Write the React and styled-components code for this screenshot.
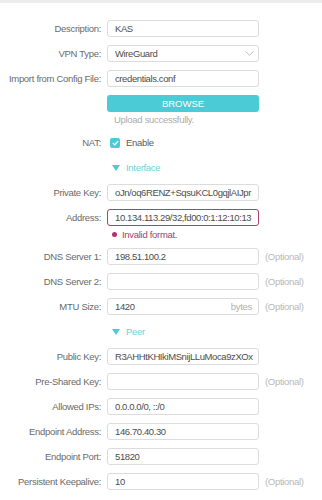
import React from 'react'
import styled, { createGlobalStyle } from 'styled-components'

const GlobalStyle = createGlobalStyle`
    body{
        margin: 0;
        background: #fff;
        font-family: "Liberation Sans", Arial, sans-serif;
    }
`;

const teal = '#4acbd6';

function Field({ label, value, optional, suffix, invalid }) {
    return (
        <Row>
            <Label>{label}</Label>
            <InputBox $invalid={invalid}>
                <InputText>{value}</InputText>
                {suffix && <Suffix>{suffix}</Suffix>}
            </InputBox>
            {optional && <Optional>(Optional)</Optional>}
        </Row>
    )
}

function Section({ title }) {
    return (
        <Row>
            <span />
            <SectionTitle>
                <svg width="8" height="6" viewBox="0 0 8 6"><path d="M0 0 H8 L4 6 Z" fill={teal} /></svg>
                {title}
            </SectionTitle>
        </Row>
    )
}

function App() {
    return (
        <>
            <GlobalStyle />
            <TopBar />
            <Form>
                <Field label="Description:" value="KAS" />
                <Row>
                    <Label>VPN Type:</Label>
                    <InputBox>
                        <InputText>WireGuard</InputText>
                        <svg width="9" height="5" viewBox="0 0 9 5">
                            <path d="M0.5 0.5 L4.5 4.3 L8.5 0.5" fill="none" stroke="#b5b5b5" strokeWidth="0.9" />
                        </svg>
                    </InputBox>
                </Row>
                <Field label="Import from Config File:" value="credentials.conf" />
                <ButtonRow>
                    <span />
                    <Browse>BROWSE</Browse>
                </ButtonRow>
                <HintRow>
                    <span />
                    <Hint>Upload successfully.</Hint>
                </HintRow>
                <Row>
                    <Label>NAT:</Label>
                    <CheckLine>
                        <CheckBox>
                            <svg width="7" height="6" viewBox="0 0 7 6">
                                <path d="M0.8 3 L2.8 4.8 L6.2 1" fill="none" stroke="#fff" strokeWidth="1.2" />
                            </svg>
                        </CheckBox>
                        Enable
                    </CheckLine>
                </Row>
                <Section title="Interface" />
                <Field label="Private Key:" value="oJn/oq6RENZ+SqsuKCL0gqjlAIJpr" />
                <AddressRow>
                    <Label>Address:</Label>
                    <InputBox $invalid>
                        <InputText>10.134.113.29/32,fd00:0:1:12:10:13</InputText>
                    </InputBox>
                </AddressRow>
                <ErrorRow>
                    <span />
                    <ErrorText><Dot />Invalid format.</ErrorText>
                </ErrorRow>
                <Field label="DNS Server 1:" value="198.51.100.2" optional />
                <Field label="DNS Server 2:" value="" optional />
                <Field label="MTU Size:" value="1420" suffix="bytes" optional />
                <Section title="Peer" />
                <Field label="Public Key:" value="R3AHHtKHIkiMSnijLLuMoca9zXOx" />
                <Field label="Pre-Shared Key:" value="" optional />
                <Field label="Allowed IPs:" value="0.0.0.0/0, ::/0" />
                <Field label="Endpoint Address:" value="146.70.40.30" />
                <Field label="Endpoint Port:" value="51820" />
                <Field label="Persistent Keepalive:" value="10" optional />
            </Form>
        </>
    )
}

const TopBar = styled.div`
    height: 3px;
    background: #ececec;
`;

const Form = styled.div`
    padding-top: 17px;
    display: flex;
    flex-direction: column;
`;

const Row = styled.div`
    display: grid;
    grid-template-columns: 101px 152px auto;
    column-gap: 6px;
    align-items: center;
    height: 17px;
    margin-bottom: 8px;
    font-size: 9.5px;
    letter-spacing: -0.3px;
`;

const ButtonRow = styled(Row)`
    margin-bottom: 0;
`;

const HintRow = styled(Row)`
    height: 12px;
    margin-top: 1px;
    margin-bottom: 9px;
`;

const AddressRow = styled(Row)`
    margin-bottom: 2px;
`;

const ErrorRow = styled(Row)`
    height: 12px;
    margin-bottom: 8px;
`;

const Label = styled.div`
    text-align: right;
    color: #6a6a6a;
    white-space: nowrap;
`;

const InputBox = styled.div`
    box-sizing: border-box;
    height: 17px;
    display: flex;
    align-items: center;
    gap: 4px;
    padding: 0 4px 0 7px;
    border: 1px solid ${p => p.$invalid ? '#a5456f' : '#dcdcdc'};
    border-radius: 3px;
    background: #fff;
    overflow: hidden;
`;

const InputText = styled.span`
    flex: 1;
    color: #4d4d4d;
    letter-spacing: -0.4px;
    white-space: nowrap;
    overflow: hidden;
`;

const Suffix = styled.span`
    color: #b0b0b0;
    margin-right: 2px;
`;

const Optional = styled.span`
    color: #b8b8b8;
    white-space: nowrap;
`;

const Browse = styled.div`
    height: 17px;
    border-radius: 3px;
    background: ${teal};
    color: #fff;
    display: flex;
    align-items: center;
    justify-content: center;
    letter-spacing: 0;
`;

const Hint = styled.div`
    color: #ababab;
    padding-left: 7px;
`;

const CheckLine = styled.div`
    display: flex;
    align-items: center;
    gap: 6px;
    padding-left: 3px;
    color: #5a5a5a;
`;

const CheckBox = styled.span`
    width: 10px;
    height: 10px;
    border-radius: 2px;
    background: ${teal};
    display: flex;
    align-items: center;
    justify-content: center;
`;

const SectionTitle = styled.div`
    display: flex;
    align-items: center;
    gap: 6px;
    padding-left: 5px;
    color: #6fd0d9;
`;

const ErrorText = styled.div`
    display: flex;
    align-items: center;
    gap: 5px;
    padding-left: 5px;
    color: #a2406b;
`;

const Dot = styled.span`
    width: 5px;
    height: 5px;
    border-radius: 50%;
    background: #b2326c;
`;

export default App
